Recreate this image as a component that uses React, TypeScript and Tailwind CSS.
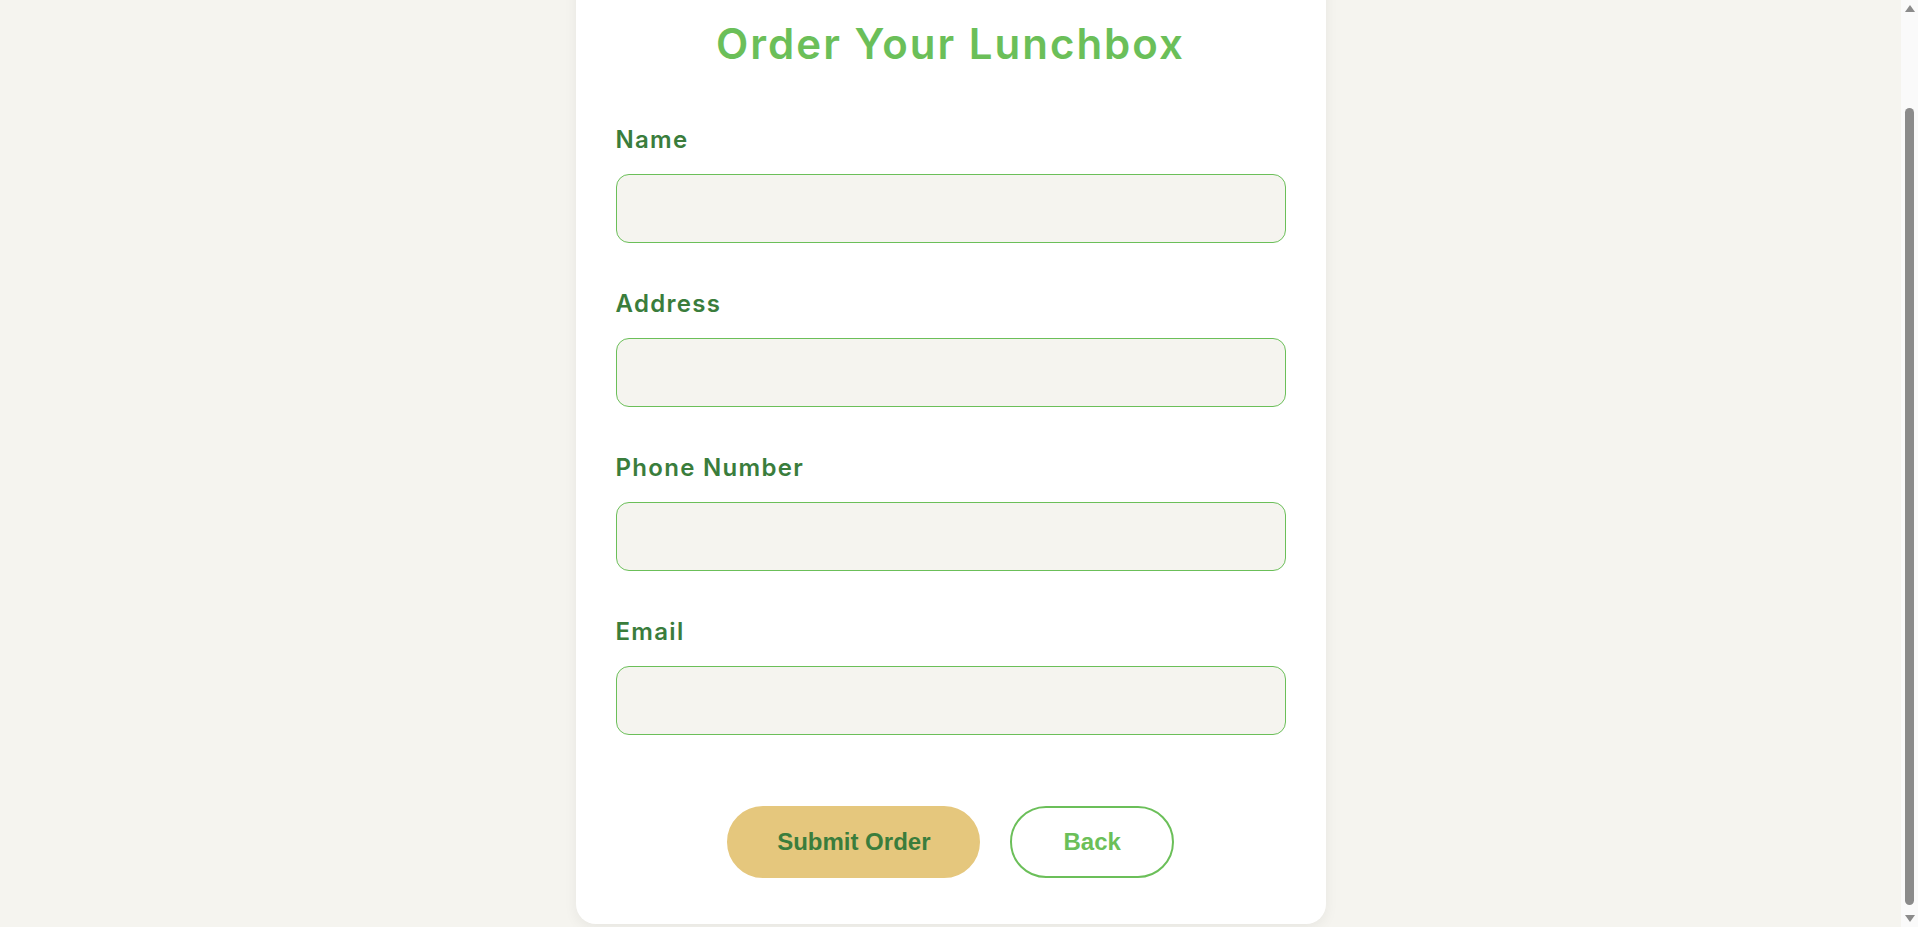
import { useLayoutEffect, useRef } from 'react'

const fields = [
  { id: 'name', label: 'Name', type: 'text' },
  { id: 'address', label: 'Address', type: 'text' },
  { id: 'phone', label: 'Phone Number', type: 'tel' },
  { id: 'email', label: 'Email', type: 'email' }
]

function FakeScrollbar() {
  return (
    <div className="flex w-[17px] shrink-0 flex-col items-center bg-[#fafafa]">
      <div className="flex h-[17px] w-full items-center justify-center">
        <svg width="10" height="7" viewBox="0 0 10 7">
          <path d="M5 0L10 7H0z" fill="#8b8b8b" />
        </svg>
      </div>
      <div className="mt-[91px] h-[797px] w-[9px] rounded-full bg-[#8b8b8b]" />
      <div className="mt-auto flex h-[17px] w-full items-center justify-center">
        <svg width="10" height="7" viewBox="0 0 10 7">
          <path d="M0 0H10L5 7z" fill="#8b8b8b" />
        </svg>
      </div>
    </div>
  )
}

export default function App() {
  const scrollRef = useRef<HTMLDivElement>(null)

  // the reference is shot scrolled to the bottom of the page
  useLayoutEffect(() => {
    const el = scrollRef.current
    if (el) el.scrollTop = el.scrollHeight
  }, [])

  return (
    <div className="flex h-screen overflow-hidden bg-[#f5f4ef]">
      <div
        ref={scrollRef}
        className="flex-1 overflow-y-auto pt-[40px] pb-[3px] [scrollbar-width:none]"
        style={{ fontFamily: 'Inter, "Open Sans", sans-serif' }}
      >
        <div className="mx-auto w-[750px] rounded-[20px] bg-white px-[40px] pt-[92px] pb-[46px] shadow-[0_4px_14px_rgba(0,0,0,0.06)]">
          <h1 className="text-center text-[42px] leading-[52px] font-semibold tracking-[2px] text-[#6bbf59]">
            Order Your Lunchbox
          </h1>

          <form className="mt-[53px] flex flex-col gap-[44px]" onSubmit={(e) => e.preventDefault()}>
            {fields.map((f) => (
              <div key={f.id} className="flex flex-col">
                <label
                  htmlFor={f.id}
                  className="pt-[1px] text-[24px] leading-[32px] font-semibold tracking-[1.3px] text-[#3a7d3c]"
                >
                  {f.label}
                </label>
                <input
                  id={f.id}
                  type={f.type}
                  className="mt-[18px] h-[69px] w-full rounded-[13px] border border-[#6bbf59] bg-[#f5f4ef] px-[18px] text-[20px] outline-none"
                />
              </div>
            ))}

            <div
              className="mt-[27px] flex justify-center gap-[30px]"
              style={{ fontFamily: '"Liberation Sans", Arial, sans-serif' }}
            >
              <button
                type="submit"
                className="flex h-[72px] items-center rounded-full border-2 border-[#e5c77d] bg-[#e5c77d] px-[48px] text-[24px] font-bold text-[#3a7d3c]"
              >
                Submit Order
              </button>
              <button
                type="button"
                className="flex h-[72px] items-center rounded-full border-2 border-[#6bbf59] bg-white px-[51px] text-[24px] font-bold text-[#6bbf59]"
              >
                Back
              </button>
            </div>
          </form>
        </div>
      </div>
      <FakeScrollbar />
    </div>
  )
}
